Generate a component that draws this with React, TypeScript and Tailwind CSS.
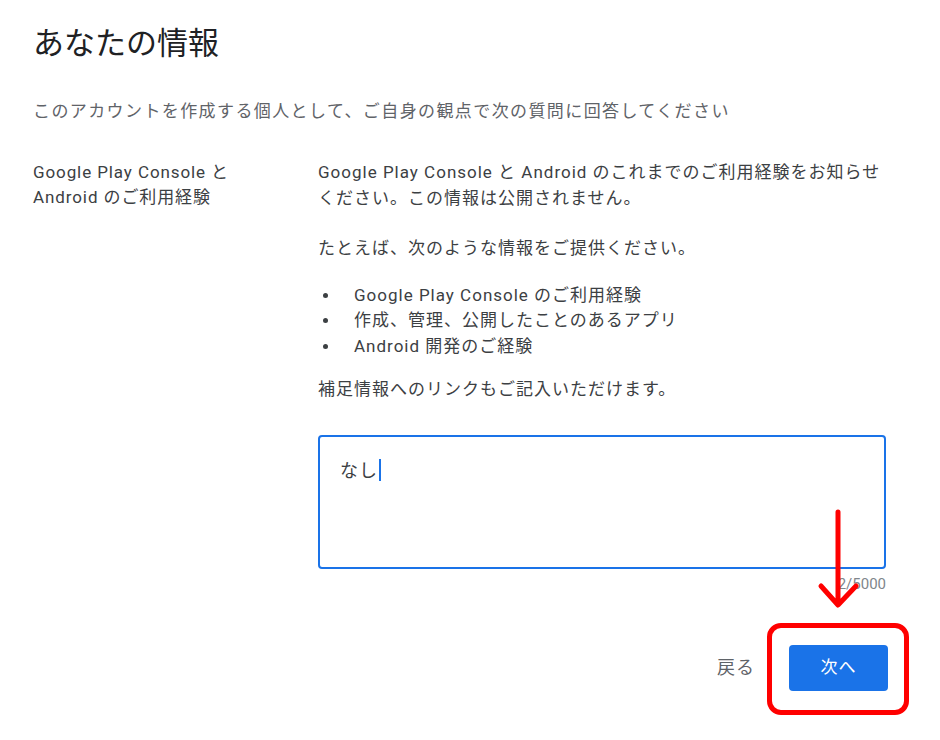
import React from 'react'

const font = { fontFamily: 'Roboto, "Noto Sans CJK JP", sans-serif' }

const bullets = [
    'Google Play Console のご利用経験',
    '作成、管理、公開したことのあるアプリ',
    'Android 開発のご経験',
]

export default function App() {
    return (
        <div
            className="relative h-[740px] w-[940px] bg-white px-[33px] pt-[23px] text-[#3c4043]"
            style={font}
        >
            <h1 className="text-[31px] leading-[42px] font-normal text-[#202124]">
                あなたの情報
            </h1>
            <p className="mt-[33px] text-[17px] leading-[26px] tracking-[1.4px] text-[#5f6368]">
                このアカウントを作成する個人として、ご自身の観点で次の質問に回答してください
            </p>

            <div className="mt-[36px] flex">
                <div className="w-[285px] text-[17px] leading-[25px] tracking-[0.9px]">
                    Google Play Console と<br />
                    Android のご利用経験
                </div>
                <div className="w-[568px] text-[17px] leading-[25.5px] tracking-[1px]">
                    <p>
                        Google Play Console と Android のこれまでのご利用経験をお知らせください。この情報は公開されません。
                    </p>
                    <p className="mt-[25px]">たとえば、次のような情報をご提供ください。</p>
                    <ul className="mt-[21px]">
                        {bullets.map((b) => (
                            <li key={b} className="flex items-center">
                                <span className="w-[36px] pl-[5px]">
                                    <span className="block h-[5px] w-[5px] rounded-full bg-[#3c4043]" />
                                </span>
                                <span>{b}</span>
                            </li>
                        ))}
                    </ul>
                    <p className="mt-[18px]">補足情報へのリンクもご記入いただけます。</p>

                    <div className="mt-[32px] h-[134px] rounded-[4px] border-2 border-[#1a73e8] px-[20px] pt-[18px]">
                        <span className="text-[18px] text-[#3c4043]">なし</span>
                        <span className="ml-[1px] inline-block h-[22px] w-[2px] translate-y-[4px] bg-[#1a73e8]" />
                    </div>
                    <div className="mt-[6px] text-right text-[15px] leading-[18px] tracking-normal text-[#80868b]">
                        2/5000
                    </div>

                    <div className="-mr-[2px] mt-[52px] flex items-center justify-end">
                        <button className="mr-[34px] text-[18px] text-[#5f6368]">戻る</button>
                        <button className="h-[46px] w-[99px] rounded-[4px] bg-[#1a73e8] text-[17px] text-white">
                            次へ
                        </button>
                    </div>
                </div>
            </div>

            {/* red annotation */}
            <svg
                className="pointer-events-none absolute left-[812px] top-[508px]"
                width="54"
                height="104"
                viewBox="0 0 54 104"
            >
                <path
                    d="M26 4 L26 96 M9 78 L26 97 L44 78"
                    stroke="#ff0000"
                    strokeWidth="5"
                    strokeLinecap="round"
                    strokeLinejoin="round"
                    fill="none"
                />
            </svg>
            <div className="pointer-events-none absolute left-[767px] top-[623px] h-[92px] w-[142px] rounded-[14px] border-[5px] border-[#ff0000]" />
        </div>
    )
}
